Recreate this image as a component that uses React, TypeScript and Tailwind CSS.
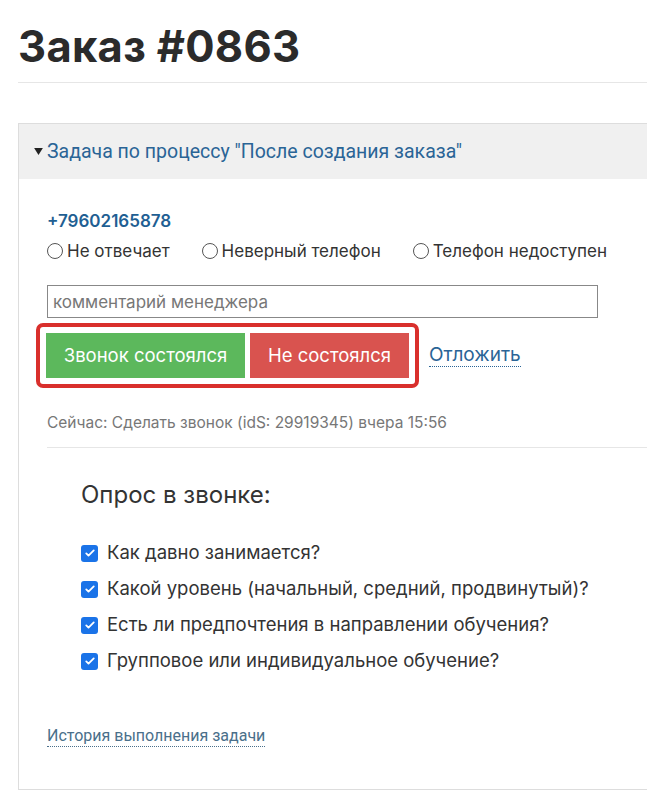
import React from "react";

const questions = [
  "Как давно занимается?",
  "Какой уровень (начальный, средний, продвинутый)?",
  "Есть ли предпочтения в направлении обучения?",
  "Групповое или индивидуальное обучение?",
];

const reasons = ["Не отвечает", "Неверный телефон", "Телефон недоступен"];

function Radio({ label }: { label: string }) {
  return (
    <label className="flex items-center gap-[4px]">
      <span className="size-[16px] rounded-full border border-[#555] bg-white" />
      <span>{label}</span>
    </label>
  );
}

function Check({ label }: { label: string }) {
  return (
    <div className="flex h-[36px] items-center gap-[9px]">
      <span className="flex size-[17px] items-center justify-center rounded-[3px] bg-[#1a73e8]">
        <svg viewBox="0 0 16 16" className="size-[12px]" fill="none">
          <path d="M3 8.5l3 3 7-7" stroke="white" strokeWidth="2.4" strokeLinecap="round" strokeLinejoin="round" />
        </svg>
      </span>
      <span>{label}</span>
    </div>
  );
}

export default function App() {
  return (
    <div className="min-h-[804px] bg-white pl-[18px] text-[#333] font-['Inter',sans-serif]">
      <h1 className="pt-[20px] pb-[10px] text-[43.5px] font-bold leading-[52px] tracking-[0.3px] text-[#2b2b2b]">
        Заказ #0863
      </h1>
      <div className="border-t border-[#e6e6e6]" />

      <div className="mt-[40px] border-y border-l border-[#ddd]">
        <div className="flex h-[55px] items-center bg-[#f0f0f0] pl-[14px] font-['Roboto',sans-serif] text-[19.5px] text-[#2a6496]">
          <svg viewBox="0 0 10 8" className="mr-[3px] h-[7px] w-[11px]" fill="#222">
            <path d="M0 0h10L5 8z" />
          </svg>
          Задача по процессу "После создания заказа"
        </div>

        <div className="pl-[28px] pt-[29px] pb-[42px]">
          <div className="text-[17px] font-semibold leading-[26px] text-[#1f5f93]">+79602165878</div>
          <div className="mt-[5px] flex items-center gap-[32px] text-[17px] leading-[24px] text-[#333]">
            {reasons.map((r) => (
              <Radio key={r} label={r} />
            ))}
          </div>

          <input
            className="mt-[22px] block h-[33px] w-[551px] border border-[#888] px-[5px] text-[17px] text-[#333] placeholder:text-[#777] outline-none"
            placeholder="комментарий менеджера"
          />

          <div className="mt-[5px] flex items-center">
            <div className="ml-[-11px] flex gap-[5px] rounded-[7px] border-[4px] border-[#d92f2c] p-[6px]">
              <button className="h-[45px] w-[199px] bg-[#5cb85c] text-[18.5px] text-white">Звонок состоялся</button>
              <button className="h-[45px] w-[159px] bg-[#d9534f] text-[18.5px] text-white">Не состоялся</button>
            </div>
            <a className="ml-[10px] border-b border-dotted border-[#2a6496] text-[19px] leading-[22px] text-[#2a6496]">
              Отложить
            </a>
          </div>

          <div className="mt-[24px] text-[15.5px] leading-[22px] text-[#777]">
            Сейчас: Сделать звонок (idS: 29919345) вчера 15:56
          </div>
          <div className="mt-[13px] border-t border-[#e6e6e6]" />

          <div className="pl-[34px] pt-[31px]">
            <div className="text-[24px] leading-[32px] text-[#333]">Опрос в звонке:</div>
            <div className="mt-[24px] text-[18.5px] text-[#333]">
              {questions.map((q) => (
                <Check key={q} label={q} />
              ))}
            </div>
          </div>

          <a className="mt-[47px] inline-block border-b border-dotted border-[#4a6f8a] font-['Roboto',sans-serif] text-[16px] leading-[20px] text-[#4a6f8a]">
            История выполнения задачи
          </a>
        </div>
      </div>
    </div>
  );
}
